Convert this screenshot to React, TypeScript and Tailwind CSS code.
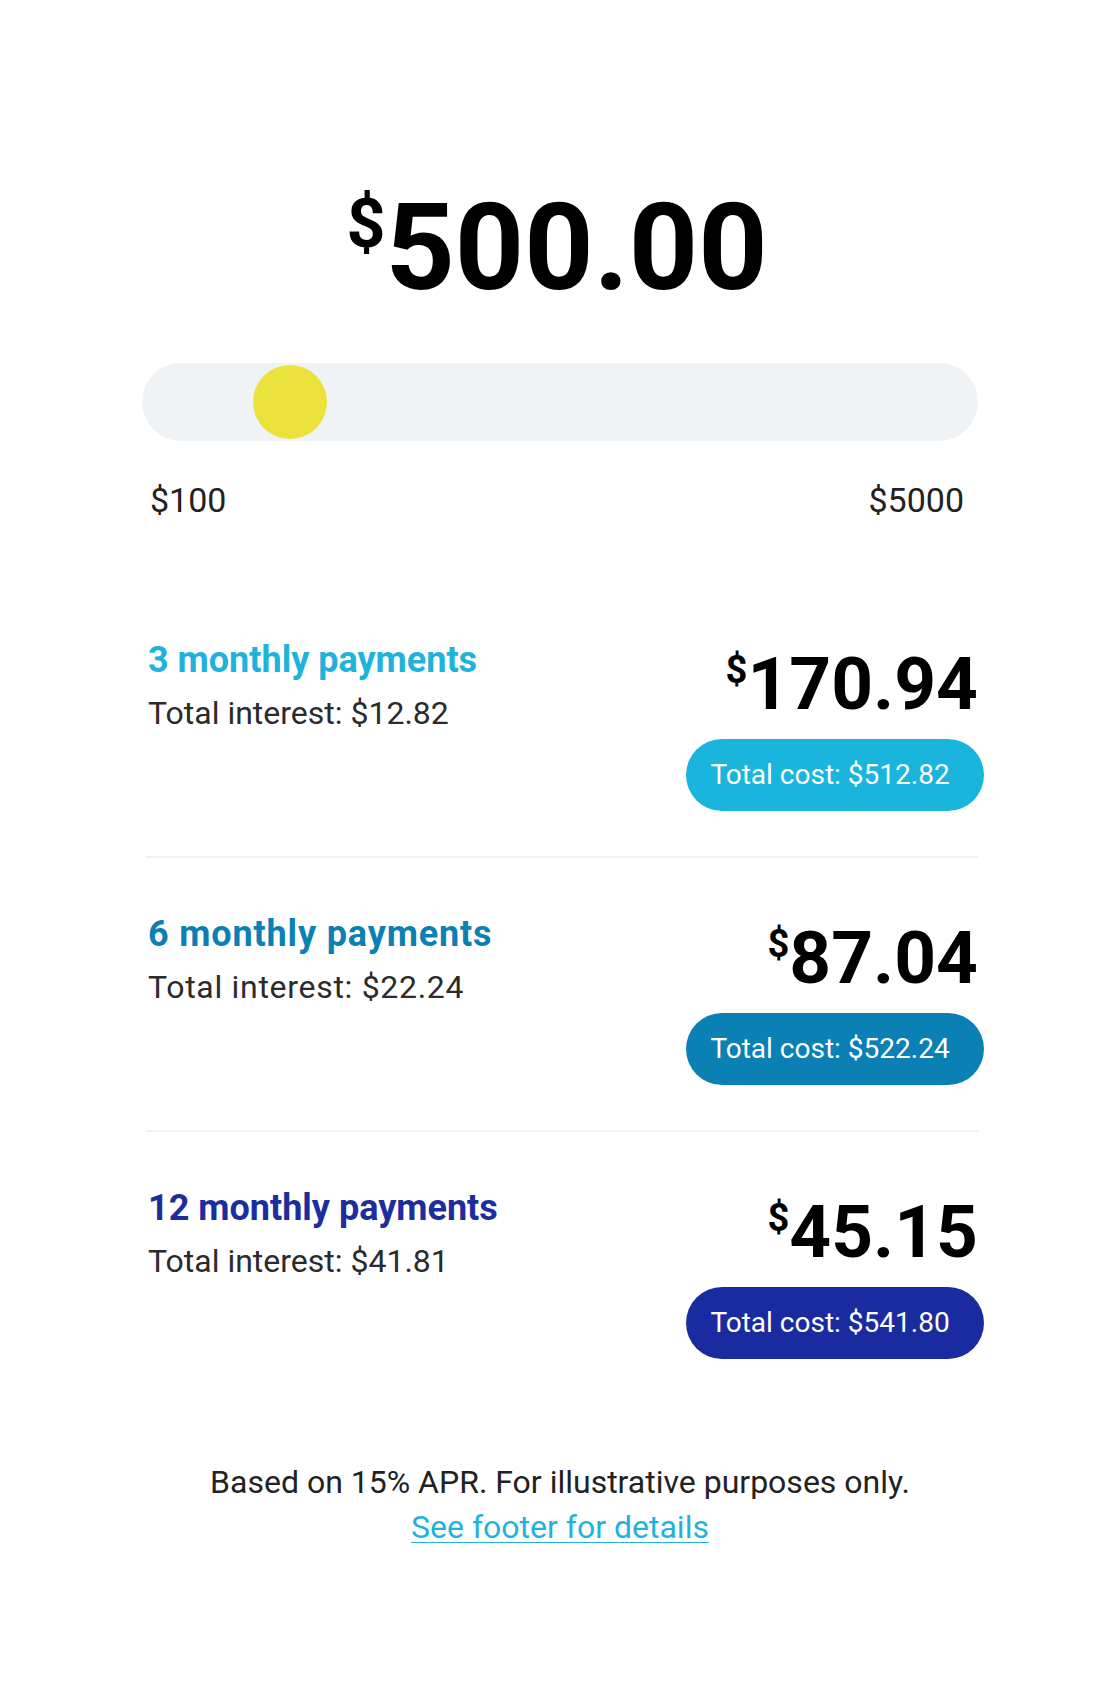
import React from 'react';

interface PlanRow {
  months: number;
  interest: string;
  monthly: string;
  total: string;
  headingClass: string;
  pillClass: string;
  headSpacing: string;
  subSpacing: string;
}

const plans: PlanRow[] = [
  {
    months: 3,
    interest: '$12.82',
    monthly: '170.94',
    total: '$512.82',
    headingClass: 'text-[#1fb3dc]',
    pillClass: 'bg-[#1ab5dd]',
    headSpacing: 'tracking-normal',
    subSpacing: 'tracking-normal',
  },
  {
    months: 6,
    interest: '$22.24',
    monthly: '87.04',
    total: '$522.24',
    headingClass: 'text-[#0d80b3]',
    pillClass: 'bg-[#0a80b5]',
    headSpacing: 'tracking-[0.85px]',
    subSpacing: 'tracking-[0.7px]',
  },
  {
    months: 12,
    interest: '$41.81',
    monthly: '45.15',
    total: '$541.80',
    headingClass: 'text-[#1c2e9e]',
    pillClass: 'bg-[#1a2b9f]',
    headSpacing: 'tracking-normal',
    subSpacing: 'tracking-normal',
  },
];

function PlanItem({ plan }: { plan: PlanRow }) {
  return (
    <div className="flex justify-between">
      {/* left: label + interest */}
      <div className="pl-[6px]">
        <div className={`text-[36px] font-bold leading-none ${plan.headingClass} ${plan.headSpacing}`}>
          {plan.months} monthly payments
        </div>
        <div className={`mt-[19px] text-[32px] leading-none text-[#2b2b2b] ${plan.subSpacing}`}>
          Total interest: {plan.interest}
        </div>
      </div>

      {/* right: monthly amount + total pill */}
      <div className="flex flex-col items-end">
        <div className="mt-[6px] flex items-start text-black">
          <span className="mt-[3px] text-[38px] font-bold leading-none">$</span>
          <span className="text-[73px] font-bold leading-none">{plan.monthly}</span>
        </div>
        <div
          className={`-mr-[6px] mt-[18px] flex h-[72px] w-[298px] items-center justify-center rounded-full pr-[10px] text-[28px] text-white ${plan.pillClass}`}
        >
          Total cost: {plan.total}
        </div>
      </div>
    </div>
  );
}

export default function App() {
  return (
    <div className="min-h-[1684px] bg-white font-['Roboto',sans-serif]">
      <div className="mx-auto w-[836px] pt-[188px]">
        {/* selected amount */}
        <div className="flex items-start justify-center pr-[6px] text-black">
          <span className="mt-[2px] text-[68px] font-bold leading-none">$</span>
          <span className="text-[121px] font-bold leading-none">500.00</span>
        </div>

        {/* slider */}
        <div className="relative mt-[54px] h-[78px] rounded-full bg-[#eff3f6]">
          <div className="absolute left-[111px] top-1/2 h-[74px] w-[74px] -translate-y-1/2 rounded-full bg-[#ebe33b]" />
        </div>
        <div className="mt-[42px] flex justify-between pl-2 pr-[14px] text-[34px] leading-none text-[#222]">
          <span>$100</span>
          <span>$5000</span>
        </div>

        {/* plans */}
        <div className="mt-[125px]">
          {plans.map((plan, i) => (
            <div key={plan.months}>
              {i > 0 && <div className="mb-[58px] ml-[4px] mt-[45px] h-[2px] bg-[#f2f2f2]" />}
              <PlanItem plan={plan} />
            </div>
          ))}
        </div>

        {/* disclaimer */}
        <div className="mt-[101px] text-center text-[32px] leading-[45px] text-[#222]">
          <p>Based on 15% APR. For illustrative purposes only.</p>
          <a href="#" className="text-[#1fb3dc] underline decoration-1 underline-offset-4">
            See footer for details
          </a>
        </div>
      </div>
    </div>
  );
}
